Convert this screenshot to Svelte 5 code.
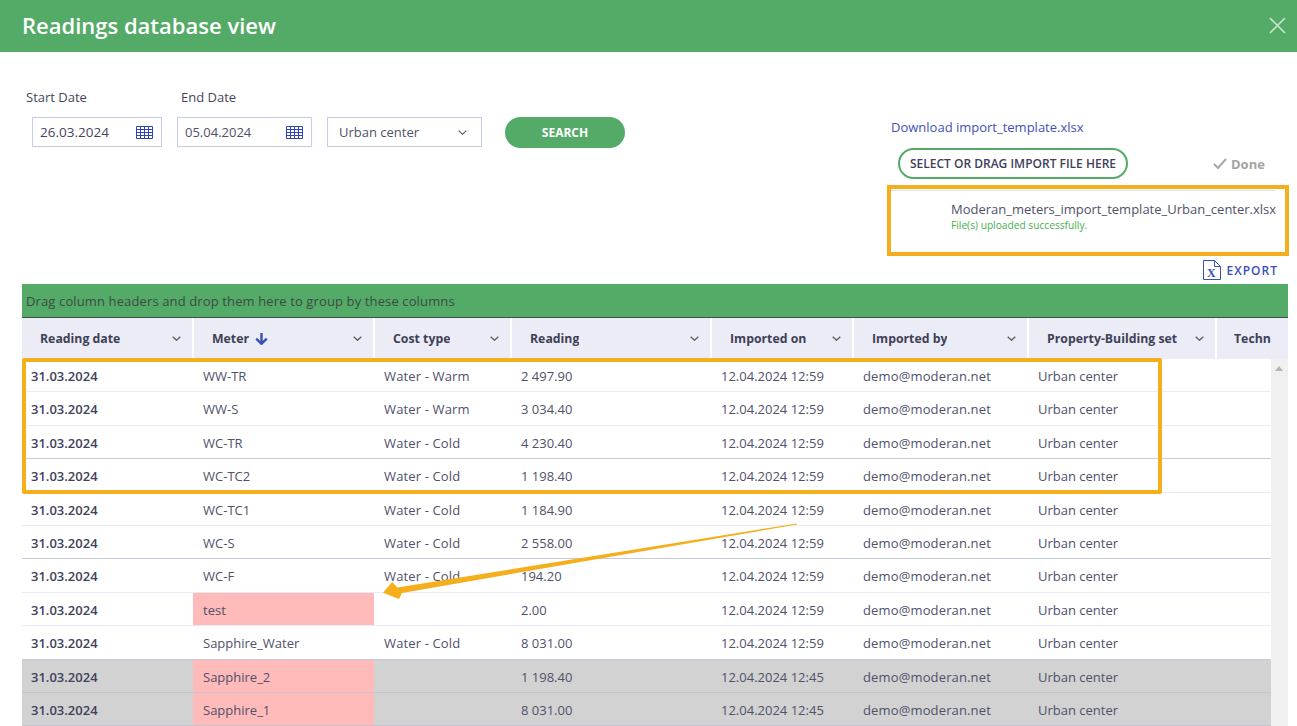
<script>
  const cold = 'Water - Cold';
  const warm = 'Water - Warm';
  const rows = [
    { m: 'WW-TR', c: warm, r: '2 497.90', t: '12:59' },
    { m: 'WW-S', c: warm, r: '3 034.40', t: '12:59' },
    { m: 'WC-TR', c: cold, r: '4 230.40', t: '12:59', dark: true },
    { m: 'WC-TC2', c: cold, r: '1 198.40', t: '12:59' },
    { m: 'WC-TC1', c: cold, r: '1 184.90', t: '12:59' },
    { m: 'WC-S', c: cold, r: '2 558.00', t: '12:59', dark: true },
    { m: 'WC-F', c: cold, r: '194.20', t: '12:59' },
    { m: 'test', c: '', r: '2.00', t: '12:59', pink: true },
    { m: 'Sapphire_Water', c: cold, r: '8 031.00', t: '12:59', dark: true },
    { m: 'Sapphire_2', c: '', r: '1 198.40', t: '12:45', pink: true, gray: true },
    { m: 'Sapphire_1', c: '', r: '8 031.00', t: '12:45', pink: true, gray: true }
  ];
  const heads = ['Reading date', 'Meter', 'Cost type', 'Reading', 'Imported on', 'Imported by', 'Property-Building set', 'Techni'];
</script>

<div class="page">
  <header class="top">
    <h1>Readings database view</h1>
    <svg class="close" viewBox="0 0 17 17" width="17" height="17"><path d="M1 1l15 15M16 1L1 16" stroke="#c9e4cf" stroke-width="1.6" fill="none"/></svg>
  </header>

  <section class="tools">
    <div class="filters">
      <div class="labels"><span class="l1">Start Date</span><span>End Date</span></div>
      <div class="fields">
        <div class="field f1">26.03.2024
          <svg class="cal" viewBox="0 0 17 13" width="17" height="13"><path d="M.5.5h16v12H.5zM.5 3.5h16M.5 6.5h16M.5 9.5h16M4.5 1v12M8.5 1v12M12.5 1v12" fill="none" stroke="#2f45b5"/></svg>
        </div>
        <div class="field f2">05.04.2024
          <svg class="cal" viewBox="0 0 17 13" width="17" height="13"><path d="M.5.5h16v12H.5zM.5 3.5h16M.5 6.5h16M.5 9.5h16M4.5 1v12M8.5 1v12M12.5 1v12" fill="none" stroke="#2f45b5"/></svg>
        </div>
        <div class="field f3">Urban center
          <svg class="chev" viewBox="0 0 9 5" width="9" height="5"><path d="M.7.7l3.8 3.6L8.3.7" fill="none" stroke="#55566c" stroke-width="1.1"/></svg>
        </div>
        <div class="search">SEARCH</div>
      </div>
    </div>
    <div class="upload">
      <div class="dl">Download import_template.xlsx</div>
      <div class="sel-row">
        <div class="select">SELECT OR DRAG IMPORT FILE HERE</div>
        <div class="done">
          <svg viewBox="0 0 14 11" width="14" height="11"><path d="M1 6l4 4 8-9" fill="none" stroke="#a6a6a6" stroke-width="2"/></svg>
          Done
        </div>
      </div>
      <div class="filebox">
        <div class="fname">Moderan_meters_import_template_Urban_center.xlsx</div>
        <div class="fstatus">File(s) uploaded successfully.</div>
      </div>
      <div class="export">
        <svg viewBox="0 0 18 20" width="18" height="20"><path d="M.5.5h11l6 6v13H.5zM11.5.5v6h6" fill="none" stroke="#3a4fb8"/><text x="4" y="16.5" class="xl">X</text></svg>
        <span>EXPORT</span>
      </div>
    </div>
  </section>

  <section class="grid">
    <div class="group">Drag column headers and drop them here to group by these columns</div>
    <div class="head">
      {#each heads as h, i}
        <div class="th">
          <span class="thname">{h}
            {#if i === 1}
              <svg class="sort" viewBox="0 0 13 12" width="13" height="12"><path d="M6.5 0v10M1.2 5.6l5.3 5.2 5.3-5.2" fill="none" stroke="#3a4fb8" stroke-width="2.4"/></svg>
            {/if}
          </span>
          {#if i < 7}
            <svg class="chev" viewBox="0 0 9 5" width="9" height="5"><path d="M.7.7l3.8 3.6L8.3.7" fill="none" stroke="#55566c" stroke-width="1.2"/></svg>
          {/if}
        </div>
      {/each}
    </div>
    <div class="body">
      <div class="rows">
        {#each rows as row}
          <div class="row" class:dark={row.dark} class:gray={row.gray}>
            <div class="td date">31.03.2024</div>
            <div class="td" class:pink={row.pink}>{row.m}</div>
            <div class="td wide">{row.c}</div>
            <div class="td">{row.r}</div>
            <div class="td">12.04.2024 {row.t}</div>
            <div class="td wide">demo@moderan.net</div>
            <div class="td">Urban center</div>
            <div class="td"></div>
          </div>
        {/each}
      </div>
      <div class="scroll"><span class="up"></span></div>
    </div>
  </section>

  <div class="hl"></div>
  <svg class="arrow" width="1297" height="726" viewBox="0 0 1297 726">
    <path d="M797 523.5L797 524.5L402 593L399 599L383 592.7L392 582L397.5 587.5Z" fill="#f5ae1c"/>
  </svg>
</div>

<style>
  :global(body) { margin: 0; background: #fff; }
  .page {
    position: relative;
    width: 1297px;
    height: 726px;
    overflow: hidden;
    font-family: "Open Sans", "Noto Sans", sans-serif;
    font-size: 13px;
    color: #50516a;
  }
  .top {
    box-sizing: border-box;
    height: 52px;
    background: #54ab68;
    display: flex;
    align-items: center;
    justify-content: space-between;
    padding: 0 11px 2px 22px;
  }
  h1 { margin: 0; font-size: 22px; font-weight: 600; color: #fff; }
  .tools {
    height: 232px;
    display: flex;
    justify-content: space-between;
    padding-right: 8px;
  }
  .filters { padding: 36px 0 0 26px; }
  .labels { display: flex; height: 29px; font-size: 13px; color: #45465e; }
  .l1 { width: 155px; }
  .fields { display: flex; align-items: flex-start; padding-left: 6px; height: 31px; }
  .field {
    box-sizing: border-box;
    height: 30px;
    border: 1px solid #c5cbe8;
    display: flex;
    align-items: center;
    justify-content: space-between;
  }
  .f1 { width: 130px; margin-right: 15px; padding: 0 8px 0 7px; color: #45465e; font-size: 13.5px; }
  .f2 { width: 135px; margin-right: 15px; padding: 0 8px 0 7px; }
  .f3 { width: 155px; margin-right: 23px; padding: 0 14px 0 11px; }
  .search {
    width: 120px;
    height: 31px;
    border-radius: 16px;
    background: #54ab68;
    color: #fff;
    font-size: 12px;
    font-weight: 700;
    display: flex;
    align-items: center;
    justify-content: center;
  }
  .upload { width: 402px; padding-top: 66px; box-sizing: border-box; }
  .dl { padding-left: 4px; height: 30px; color: #3f51b9; }
  .sel-row { display: flex; align-items: flex-start; padding-left: 11px; height: 37px; }
  .select {
    box-sizing: border-box;
    width: 230px;
    height: 31px;
    border: 2px solid #54ab68;
    border-radius: 16px;
    font-size: 12px;
    font-weight: 600;
    color: #40415a;
    display: flex;
    align-items: center;
    justify-content: center;
    white-space: nowrap;
  }
  .done {
    margin-left: 85px;
    height: 31px;
    font-weight: 700;
    color: #a3a3a3;
    display: flex;
    align-items: center;
    gap: 4px;
  }
  .filebox {
    box-sizing: border-box;
    height: 71px;
    border: 4px solid #f5ae1c;
    padding: 11px 0 0 60px;
    position: relative;
    white-space: nowrap;
  }
  .filebox::before {
    content: "";
    position: absolute;
    left: 0;
    right: 10px;
    top: 1px;
    height: 1px;
    background: #e4e4e8;
  }
  .fname { line-height: 18px; }
  .fstatus { font-size: 10.2px; color: #43b04a; line-height: 14px; }
  .export {
    display: flex;
    align-items: center;
    justify-content: flex-end;
    gap: 6px;
    height: 28px;
    padding-right: 11px;
    font-size: 12px;
    font-weight: 600;
    letter-spacing: 1px;
    color: #3a4fb8;
  }
  .xl { font: 700 12px "Liberation Serif", serif; fill: #3a4fb8; }
  .grid { margin: 0 9px 0 22px; }
  .group {
    box-sizing: border-box;
    height: 34px;
    background: #54ab68;
    border-bottom: 1px solid #3f4f47;
    padding-left: 4px;
    display: flex;
    align-items: center;
    color: #3d4a44;
    letter-spacing: 0.125px;
  }
  .head {
    height: 41px;
    overflow: hidden;
    display: grid;
    grid-template-columns: 172px 181px 137px 200px 142px 175px 188px 71px;
  }
  .th {
    box-sizing: border-box;
    background: #ebecf5;
    border-right: 2px solid #fff;
    padding: 0 11px 0 18px;
    display: flex;
    align-items: center;
    justify-content: space-between;
    font-weight: 700;
    font-size: 12.3px;
    color: #3f4058;
    white-space: nowrap;
    overflow: hidden;
  }
  .th:last-child { border-right: 0; padding: 0 17px 0 17px; }
  .thname { display: flex; align-items: center; gap: 6px; overflow: hidden; }
  .body { position: relative; }
  .rows { width: 1249px; overflow: hidden; }
  .row {
    box-sizing: border-box;
    height: 33.4px;
    border-bottom: 1px solid #eaeaf6;
    display: grid;
    grid-template-columns: 171px 181px 137px 200px 142px 175px 189px 54px;
    background: #fff;
  }
  .row.dark { border-bottom-color: #c6c9dc; }
  .row.gray { background: #d2d2d2; border-bottom-color: #c3c3d2; }
  .td {
    padding: 1.6px 0 0 10px;
    display: flex;
    align-items: center;
    white-space: nowrap;
    overflow: hidden;
  }
  .wide { letter-spacing: 0.14px; }
  .date { padding-left: 9px; font-weight: 600; color: #40415a; }
  .pink { background: #ffbaba; }
  .scroll {
    position: absolute;
    top: 0;
    bottom: 0;
    left: 1249px;
    width: 17px;
    background: #f0f0f0;
  }
  .up {
    position: absolute;
    left: 4px;
    top: 7px;
    border: 4px solid transparent;
    border-top: 0;
    border-bottom: 5px solid #b5b5b5;
  }
  .hl {
    position: absolute;
    box-sizing: border-box;
    left: 22px;
    top: 358px;
    width: 1140px;
    height: 136px;
    border: 4px solid #f5ae1c;
    border-radius: 2px;
  }
  .arrow { position: absolute; left: 0; top: 0; pointer-events: none; }
</style>
